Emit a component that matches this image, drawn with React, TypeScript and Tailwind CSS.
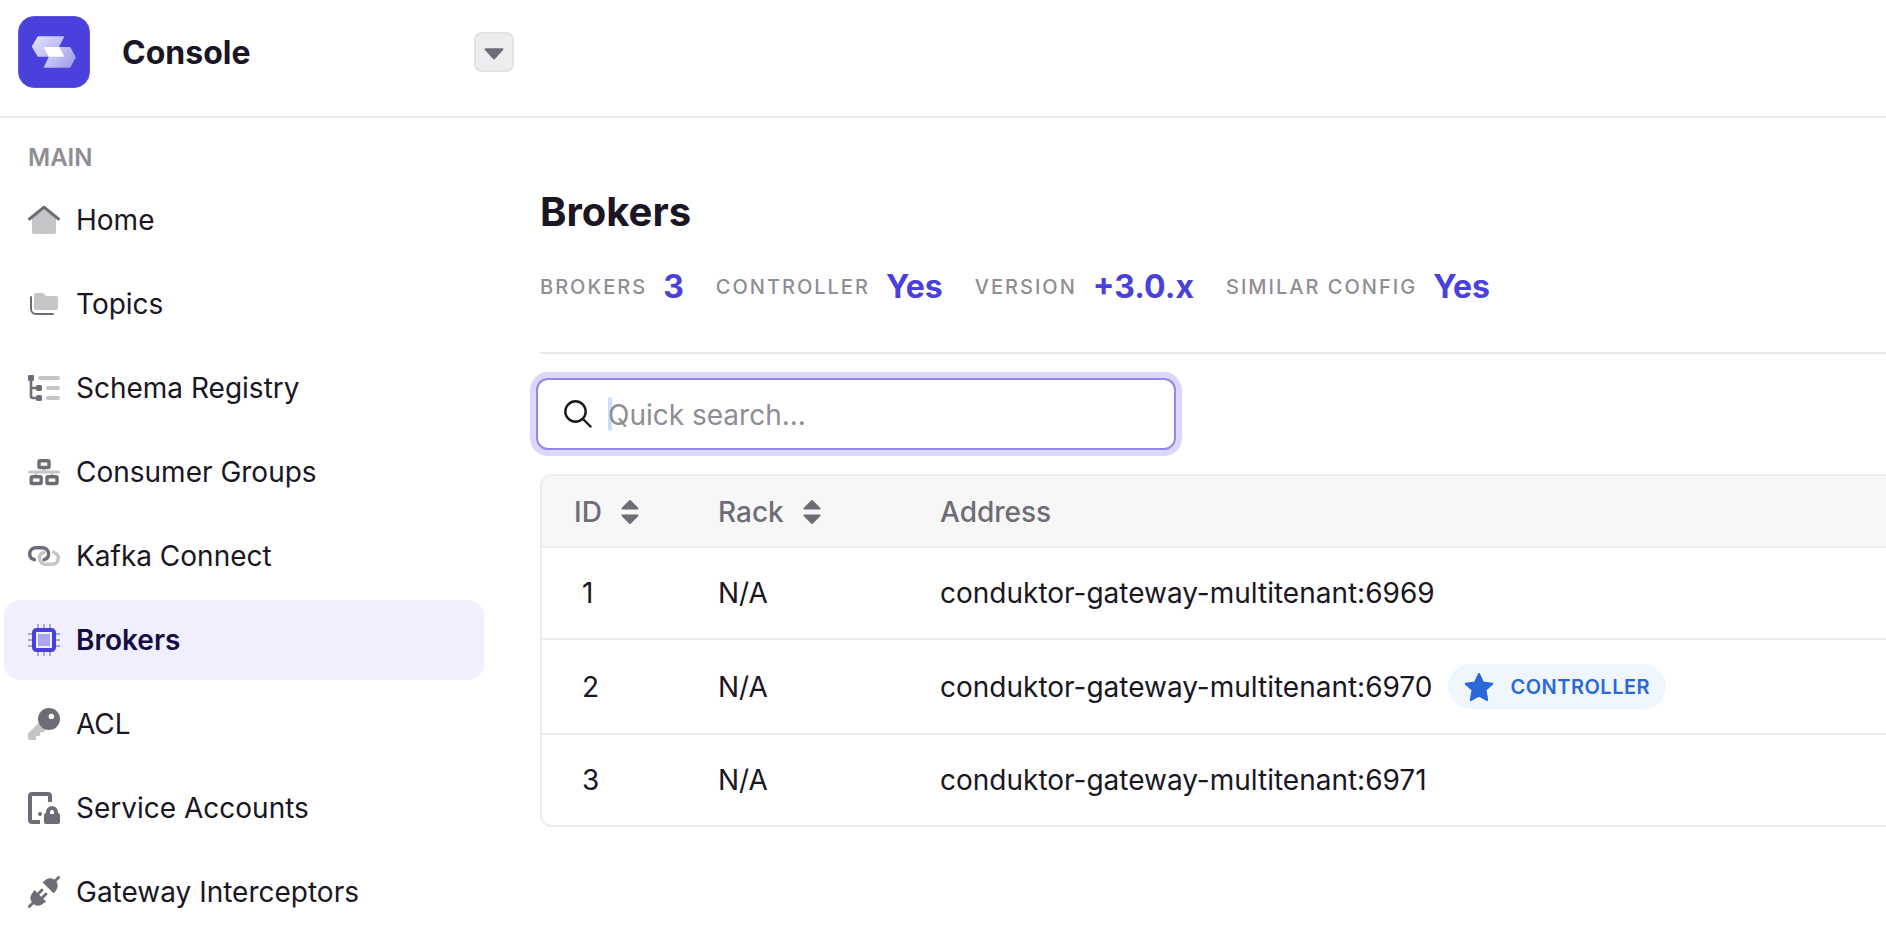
import { useState } from 'react';
import type { ReactNode } from 'react';

type NavItem = {
  label: string;
  icon: ReactNode;
};

type Broker = {
  id: number;
  rack: string;
  address: string;
  isController?: boolean;
};

const DARK = '#6f6c77';
const LIGHT = '#c5c5c8';

function Icon({ children }: { children: ReactNode }) {
  return (
    <svg viewBox="0 0 32 32" className="h-8 w-8 shrink-0" fill="none" aria-hidden="true">
      {children}
    </svg>
  );
}

const navItems: NavItem[] = [
  {
    label: 'Home',
    icon: (
      <Icon>
        <path d="M4 14 16 4l12 10v14a2 2 0 0 1-2 2H6a2 2 0 0 1-2-2Z" fill={LIGHT} />
        <path d="M1.5 15 16 3.2 30.5 15" stroke={DARK} strokeWidth="3" strokeLinecap="round" strokeLinejoin="round" />
      </Icon>
    ),
  },
  {
    label: 'Topics',
    icon: (
      <Icon>
        <path d="M6 7a2 2 0 0 1 2-2h6.5a2 2 0 0 1 1.5.7L18 8h10a2 2 0 0 1 2 2v10a2 2 0 0 1-2 2H8a2 2 0 0 1-2-2Z" fill={LIGHT} />
        <path d="M3 9v12a5 5 0 0 0 5 5h17" stroke={DARK} strokeWidth="2" strokeLinecap="round" />
      </Icon>
    ),
  },
  {
    label: 'Schema Registry',
    icon: (
      <Icon>
        <path d="M3 6v18a2 2 0 0 0 2 2h6M3 16h8" stroke={DARK} strokeWidth="2.6" />
        <rect x="0" y="3" width="6" height="6" rx="1.2" fill={DARK} />
        <rect x="8" y="13" width="6" height="6" rx="1.6" fill={DARK} />
        <rect x="8" y="23" width="6" height="6" rx="1.6" fill={DARK} />
        <rect x="10" y="4" width="22" height="4" rx="2" fill={LIGHT} />
        <rect x="18" y="14" width="14" height="4" rx="2" fill={LIGHT} />
        <rect x="18" y="24" width="14" height="4" rx="2" fill={LIGHT} />
      </Icon>
    ),
  },
  {
    label: 'Consumer Groups',
    icon: (
      <Icon>
        <path d="M1.5 16h29M16 12v3M8 16v4M24 16v4" stroke={LIGHT} strokeWidth="3" strokeLinecap="round" />
        <g stroke={DARK} strokeWidth="3.4">
          <rect x="11" y="4.700" width="10" height="6.800" rx="1" />
          <rect x="3.200" y="20.700" width="10" height="6.800" rx="1" />
          <rect x="19" y="20.700" width="10" height="6.800" rx="1" />
        </g>
      </Icon>
    ),
  },
  {
    label: 'Kafka Connect',
    icon: (
      <Icon>
        <g strokeWidth="3.4" strokeLinecap="round">
          <path d="M25.6 12.300c2.900.9 4.700 3 4.700 5.700 0 3.600-2.500 6.200-6.400 6.200h-6c-3.900 0-6.500-2.600-6.500-6.200 0-2.800 1.800-4.900 4.600-5.700" stroke={LIGHT} />
          <path d="M6.400 19.700c-2.900-.9-4.700-3-4.700-5.700 0-3.600 2.500-6.200 6.400-6.200h6c3.900 0 6.500 2.600 6.500 6.200 0 2.800-1.800 4.900-4.600 5.700" stroke={DARK} />
        </g>
      </Icon>
    ),
  },
  {
    label: 'Brokers',
    icon: (
      <Icon>
        <path
          d="M10 0v4M16 0v4M22 0v4M10 28v4M16 28v4M22 28v4M0 10h4M0 16h4M0 22h4M28 10h4M28 16h4M28 22h4"
          stroke="#aaa6f0"
          strokeWidth="2"
        />
        <rect x="6" y="6" width="20" height="20" rx="2.5" stroke="#4a40dc" strokeWidth="4" />
        <rect x="10" y="10" width="12" height="12" fill="#aaa6f0" />
      </Icon>
    ),
  },
  {
    label: 'ACL',
    icon: (
      <Icon>
        <path d="M0 25.4 11 14.4l7 7-2.800 2.800h-2.400l-.8.8v2.200l-.8.8H8v3.200l-.8.8H1.500L0 30.500Z" fill={LIGHT} />
        <circle cx="21" cy="11" r="11" fill={DARK} />
        <circle cx="23.4" cy="8.4" r="2.7" fill="#fff" />
      </Icon>
    ),
  },
  {
    label: 'Service Accounts',
    icon: (
      <Icon>
        <path d="M22 10V4a2 2 0 0 0-2-2H4a2 2 0 0 0-2 2v24a2 2 0 0 0 2 2h8" stroke={DARK} strokeWidth="4" />
        <circle cx="12" cy="22" r="2" fill={DARK} />
        <path
          d="M18 21v-1a6 6 0 0 1 12 0v1a2 2 0 0 1 2 2v7a2 2 0 0 1-2 2H18a2 2 0 0 1-2-2v-7a2 2 0 0 1 2-2Zm4 1h4v-2a2 2 0 0 0-4 0Z"
          fill={DARK}
        />
      </Icon>
    ),
  },
  {
    label: 'Gateway Interceptors',
    icon: (
      <Icon>
        <path d="m1.4 30.6 4-4M27 5l3.600-3.600M10 18l4-4M14 22l4-4" stroke={DARK} strokeWidth="2.8" strokeLinecap="round" />
        <path d="M6.700 14.300 18 25.600l-1 1.200-1.400.2C13 30 9 30.600 6 28.200l-2.200-2.200C1.600 23 2 19.500 5 16.600v-1.400Z" fill={DARK} />
        <path d="M14.700 6.500C18 2.500 22.500 1.200 26 3.400L28.600 6c2.200 3.500 1 7.800-3.100 11.300Z" fill={DARK} />
      </Icon>
    ),
  },
];

const stats = [
  { label: 'BROKERS', value: '3' },
  { label: 'CONTROLLER', value: 'Yes' },
  { label: 'VERSION', value: '+3.0.x' },
  { label: 'SIMILAR CONFIG', value: 'Yes' },
];

const brokers: Broker[] = [
  { id: 1, rack: 'N/A', address: 'conduktor-gateway-multitenant:6969' },
  { id: 2, rack: 'N/A', address: 'conduktor-gateway-multitenant:6970', isController: true },
  { id: 3, rack: 'N/A', address: 'conduktor-gateway-multitenant:6971' },
];

function Logo() {
  return (
    <svg viewBox="0 0 72 72" className="h-[72px] w-[72px] shrink-0" role="img" aria-label="Conduktor">
      <defs>
        <linearGradient id="logo-top" x1="0" y1="0" x2="1" y2="0.6">
          <stop offset="0" stopColor="#e4e4fc" />
          <stop offset="1" stopColor="#b4b4f2" />
        </linearGradient>
        <linearGradient id="logo-bottom" x1="0" y1="0" x2="1" y2="0.6">
          <stop offset="0" stopColor="#d8d8fa" />
          <stop offset="1" stopColor="#a5a3ee" />
        </linearGradient>
      </defs>
      <rect x="0.5" y="0.5" width="71" height="71" rx="15.5" fill="#4a40dc" stroke="#5d54e2" />
      <g strokeLinejoin="round" strokeWidth="1.5">
        <path d="M14.700 30.500 20.300 21h25l-5 9.700 5 9.300h-25Z" fill="url(#logo-top)" stroke="url(#logo-top)" />
        <path d="M26.700 31.700h25l5.300 9.600-5.300 9.700h-25l4.600-9.700Z" fill="url(#logo-bottom)" stroke="url(#logo-bottom)" />
        <path d="M26.700 31.700h14l4.500 8.300h-14Z" fill="#fff" stroke="#fff" />
      </g>
    </svg>
  );
}

function SortIcon() {
  return (
    <svg viewBox="0 0 18 26" className="h-[26px] w-[18px]" fill={DARK} stroke={DARK} strokeLinejoin="round" strokeWidth="2" aria-hidden="true">
      <path d="M9 2 1.500 9.500h15Z" />
      <path d="M9 24 1.500 16.500h15Z" />
    </svg>
  );
}

export default function App() {
  const [active, setActive] = useState('Brokers');
  const [query, setQuery] = useState('');

  const rows = brokers.filter((broker) => broker.address.includes(query.trim()));

  return (
    <div className="min-h-screen overflow-x-hidden bg-white font-['Inter','Liberation_Sans',sans-serif] text-[28px] text-[#1a1624]">
      <header className="flex items-start border-b-2 border-[#ececee] px-[18px] pt-4 pb-7">
        <div className="flex w-[496px] items-center">
          <Logo />
          <span className="ml-8 pt-0.5 text-[32px] leading-10 font-bold">Console</span>
          <button
            type="button"
            aria-label="Switch product"
            className="ml-auto flex h-10 w-10 items-center justify-center rounded-lg border-2 border-[#e2e2e4] bg-[#ededef]"
          >
            <svg viewBox="0 0 20 12" className="mt-1 h-3 w-5" fill={DARK} stroke={DARK} strokeLinejoin="round" strokeWidth="2" aria-hidden="true">
              <path d="M1.500 1.200h17L10 10.500Z" />
            </svg>
          </button>
        </div>
      </header>

      <div className="flex">
        <aside className="w-[484px] shrink-0 pt-[25px] pl-1">
          <h2 className="mb-[7px] pl-6 text-2xl leading-[30px] font-semibold text-[#8f8d95]">MAIN</h2>
          <nav className="flex flex-col gap-1">
            {navItems.map((item) => (
              <a
                key={item.label}
                href="#"
                onClick={() => setActive(item.label)}
                aria-current={active === item.label ? 'page' : undefined}
                className={`flex h-20 items-center gap-4 rounded-2xl pl-6 ${
                  active === item.label ? 'bg-[#f0effd] font-semibold text-[#140d42]' : ''
                }`}
              >
                {item.icon}
                {item.label}
              </a>
            ))}
          </nav>
        </aside>

        <main className="min-w-0 flex-1 pt-[70px] pl-14">
          <h1 className="text-[40px] leading-12 font-bold">Brokers</h1>

          <dl className="mt-[31px] flex gap-8 border-b-2 border-[#e9e9ea] pb-[45px] whitespace-nowrap">
            {stats.map((stat) => (
              <div key={stat.label} className="flex items-center gap-4">
                <dt className="text-xl font-medium tracking-[2px] text-[#8f8d95]">{stat.label}</dt>
                <dd className="text-[32px] leading-10 font-bold text-[#4a40dc]">{stat.value}</dd>
              </div>
            ))}
          </dl>

          <label className="relative mt-6 -ml-1 flex h-[72px] w-[640px] items-center rounded-xl border-2 border-[#9188e8] bg-white pl-[26px] ring-6 ring-[#dbd8fa]">
            <svg viewBox="0 0 28 28" className="h-7 w-7 shrink-0" fill="none" stroke="#1a1624" strokeWidth="2.4" strokeLinecap="round" aria-hidden="true">
              <circle cx="11.5" cy="11.5" r="10.2" />
              <path d="m19 19 7.500 7.500" />
            </svg>
            <span className="absolute top-[17px] left-[70px] h-[34px] w-1 rounded-xs bg-[#cadeff]" />
            <input
              type="text"
              aria-label="Quick search"
              placeholder="Quick search..."
              value={query}
              onChange={(e) => setQuery(e.target.value)}
              className="relative ml-4 min-w-0 flex-1 bg-transparent pt-0.5 outline-none placeholder:text-[#8f8d95]"
            />
          </label>

          <div className="mt-6 overflow-hidden rounded-l-xl border-2 border-r-0 border-[#ededee]">
            <table className="w-full table-fixed border-separate border-spacing-0 text-left leading-[42px]">
              <thead className="bg-[#f7f7f7] text-[#6f6c77] [&_th]:border-b-2 [&_th]:border-[#ededee] [&_th]:pt-[15px] [&_th]:pb-[13px] [&_th]:pl-8 [&_th]:font-medium">
                <tr>
                  <th className="w-36">
                    <button type="button" className="flex items-center gap-[19px]">
                      ID <SortIcon />
                    </button>
                  </th>
                  <th className="w-[222px]">
                    <button type="button" className="flex items-center gap-[19px]">
                      Rack <SortIcon />
                    </button>
                  </th>
                  <th>Address</th>
                </tr>
              </thead>
              <tbody className="[&_td]:border-[#ededee] [&_td]:py-6 [&>tr:not(:last-child)>td]:border-b-2">
                {rows.map((broker) => (
                  <tr key={broker.id}>
                    <td className="pl-10">{broker.id}</td>
                    <td className="pl-8">{broker.rack}</td>
                    <td className="pl-8">
                      <div className="flex items-center gap-4">
                        {broker.address}
                        {broker.isController && (
                          <span className="flex h-[45px] items-center gap-4 rounded-full bg-[#eff6fe] px-4 text-xl font-semibold tracking-wide text-[#2c68d8]">
                            <svg viewBox="0 0 30 30" className="h-[30px] w-[30px]" fill="#2c68d8" stroke="#2c68d8" strokeLinejoin="round" strokeWidth="2" aria-hidden="true">
                              <path d="m15 2 4 8.500 9.300 1.200-6.900 6.300 1.800 10L15 23.500 6.800 28l1.800-10-6.900-6.300L11 10.500Z" />
                            </svg>
                            CONTROLLER
                          </span>
                        )}
                      </div>
                    </td>
                  </tr>
                ))}
              </tbody>
            </table>
          </div>
        </main>
      </div>
    </div>
  );
}
